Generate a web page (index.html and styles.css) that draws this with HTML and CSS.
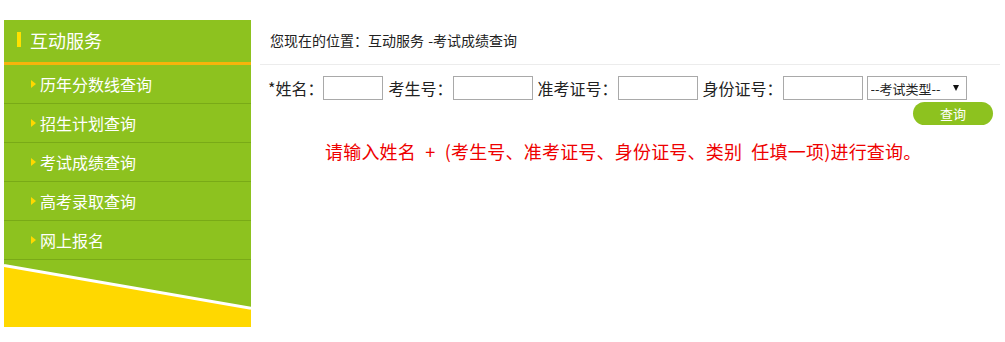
FILE: index.html
```html
<!DOCTYPE html>
<html lang="zh-CN">
<head>
<meta charset="utf-8">
<title>考试成绩查询</title>
<link rel="stylesheet" href="styles.css">
</head>
<body>
<div class="page">
  <aside class="sidebar">
    <div class="side-title"><span class="bar"></span>互动服务</div>
    <ul class="side-menu">
      <li><span class="arrow"></span>历年分数线查询</li>
      <li><span class="arrow"></span>招生计划查询</li>
      <li><span class="arrow"></span>考试成绩查询</li>
      <li><span class="arrow"></span>高考录取查询</li>
      <li><span class="arrow"></span>网上报名</li>
    </ul>
    <div class="side-foot">
      <svg width="247" height="67" viewBox="0 0 247 67" preserveAspectRatio="none">
        <rect x="0" y="0" width="247" height="67" fill="#ffd800"/>
        <polygon points="0,0 247,0 247,48 0,5" fill="#8dc21f"/>
        <line x1="0" y1="5.5" x2="247" y2="48.3" stroke="#ffffff" stroke-width="3"/>
      </svg>
    </div>
  </aside>
  <main class="main">
    <div class="crumb">您现在的位置：互动服务 -考试成绩查询</div>
    <form class="query">
      <div class="row">
        <label class="lbl">*姓名：</label><input class="ipt ipt-s" type="text">
        <label class="lbl gap">考生号：</label><input class="ipt" type="text">
        <label class="lbl gap">准考证号：</label><input class="ipt" type="text">
        <label class="lbl gap">身份证号：</label><input class="ipt" type="text">
        <span class="sel-wrap"><select class="sel"><option>--考试类型--</option></select></span>
      </div>
      <div class="btn-row"><button type="button" class="btn">查询</button></div>
    </form>
    <p class="msg">请输入姓名 + (考生号、准考证号、身份证号、类别 任填一项)进行查询。</p>
  </main>
</div>
</body>
</html>
```

FILE: styles.css
```css
* { box-sizing: border-box; }
html, body { margin: 0; padding: 0; background: #fff; }
body {
  font-family: "Noto Sans CJK SC", "Microsoft YaHei", "Liberation Sans", sans-serif;
  color: #333;
}
.page {
  display: flex;
  align-items: flex-start;
  padding: 20px 0 0 4px;
  gap: 9px;
}
.sidebar {
  width: 247px;
  flex: none;
  background: #8dc21f;
}
.side-title {
  height: 45px;
  display: flex;
  align-items: center;
  padding: 0 0 3px 13px;
  color: #fff;
  font-size: 18px;
  border-bottom: 3px solid #f6b40b;
}
.side-title .bar {
  width: 4px;
  height: 15px;
  background: #ffe100;
  margin-right: 9px;
}
.side-menu {
  list-style: none;
  margin: 0;
  padding: 0;
}
.side-menu li {
  height: 39px;
  border-bottom: 1px solid #79aa17;
  display: flex;
  align-items: center;
  padding-left: 27px;
  color: #fff;
  font-size: 16px;
}
.side-menu .arrow {
  width: 0;
  height: 0;
  border-top: 4px solid transparent;
  border-bottom: 4px solid transparent;
  border-left: 5px solid #ffd800;
  margin-right: 4px;
}
.side-foot {
  height: 67px;
}
.side-foot svg { display: block; }
.main {
  width: 740px;
  flex: none;
}
.crumb {
  height: 45px;
  line-height: 41px;
  padding-left: 10px;
  font-size: 14px;
  color: #222;
  border-bottom: 1px solid #ececec;
  word-spacing: 1px;
}
.query { margin: 0; padding: 11px 0 0 8px; }
.row {
  display: flex;
  align-items: center;
  height: 24px;
}
.lbl {
  font-size: 16px;
  color: #222;
  white-space: nowrap;
}
.lbl.gap { margin-left: 5px; }
.ipt {
  width: 80px;
  height: 24px;
  border: 1px solid #a9a9a9;
  padding: 0 2px;
  margin: 0;
  font-size: 13px;
}
.ipt-s { width: 60px; }
.sel-wrap {
  position: relative;
  margin-left: 4px;
  display: inline-block;
  height: 24px;
}
.sel-wrap::after {
  content: "";
  position: absolute;
  right: 8px;
  top: 9px;
  width: 0;
  height: 0;
  border-left: 3px solid transparent;
  border-right: 3px solid transparent;
  border-top: 6px solid #111;
  pointer-events: none;
}
.sel {
  -webkit-appearance: none;
  appearance: none;
  display: block;
  width: 100px;
  height: 24px;
  border: 1px solid #a9a9a9;
  background: #fff;
  padding: 0 0 0 3px;
  margin: 0;
  font-family: inherit;
  font-size: 13px;
  color: #222;
  border-radius: 0;
}
.btn-row {
  display: flex;
  justify-content: flex-end;
  padding-right: 7px;
  margin-top: 2px;
}
.btn {
  width: 80px;
  height: 23px;
  border: 0;
  border-radius: 12px;
  background: #8dc21f;
  color: #fff;
  font-family: inherit;
  font-size: 13px;
  line-height: 23px;
  padding: 0;
}
.msg {
  margin: 12px 0 0;
  padding-left: 65px;
  line-height: 28px;
  font-size: 18px;
  color: #ee0000;
  word-spacing: 5px;
  letter-spacing: 0.2px;
}
```
